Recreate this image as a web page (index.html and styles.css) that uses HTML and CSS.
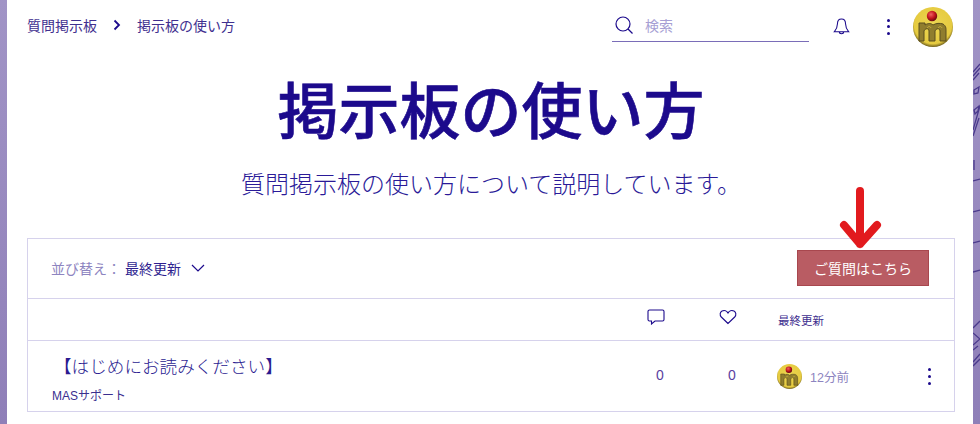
FILE: index.html
```html
<!DOCTYPE html>
<html lang="ja">
<head>
    <meta charset="UTF-8">
    <meta name="viewport" content="width=device-width, initial-scale=1.0">
    <title>掲示板の使い方</title>
    <link rel="stylesheet" href="styles.css">
</head>
<body>
    <svg class="defs" width="0" height="0" aria-hidden="true">
        <defs>
            <radialGradient id="coin" cx="50%" cy="45%" r="55%">
                <stop offset="0" stop-color="#ecd652"/>
                <stop offset="0.85" stop-color="#e6cb40"/>
                <stop offset="1" stop-color="#6e5e1c"/>
            </radialGradient>
            <radialGradient id="ball" cx="40%" cy="35%" r="65%">
                <stop offset="0" stop-color="#f06060"/>
                <stop offset="0.6" stop-color="#c0141c"/>
                <stop offset="1" stop-color="#6a0a10"/>
            </radialGradient>
            <symbol id="logo" viewBox="0 0 40 40">
                <circle cx="20" cy="20" r="20" fill="url(#coin)"/>
                <path d="M6 16h6v2c3-2 6-2 8 0 3-2 7-2 10-1 3 2 3 4 3 7v10h-6V24c0-3-4-3-5 0v10h-6V24c0-3-4-3-5 0v10H6z" fill="#8f7d2e" stroke="#5a4e1e" stroke-width="1"/>
                <path d="M14 21c2-2 3-2 4 0M25 21c2-2 3-2 4 0" fill="none" stroke="#c9b23c" stroke-width="1"/>
                <circle cx="19" cy="9" r="5.200" fill="url(#ball)"/>
            </symbol>
        </defs>
    </svg>

    <!-- Bit of the site background that shows on the right -->
    <svg class="backdrop" viewBox="0 0 7 424" width="7" height="424" aria-hidden="true">
        <g fill="none" stroke="#4a3a8c" stroke-width="1.300">
            <path d="M0 72l7-8M0 76l7-8M0 80l6-7M1 90l5-3-1 6-4 1zM1 110l5-4-1 5-3 3zM0 130l7-24M0 136l6-18M1 160v10M0 181l7-2M0 212l7-2M0 243l7-2M0 272l7-2M0 328l7-7M0 333l7 6-7 6M0 350l5-4M0 362l7-8M0 366l7-7"/>
        </g>
    </svg>

    <div class="page">
        <!-- Top bar -->
        <header class="topbar">
            <nav class="crumbs">
                <span>質問掲示板</span>
                <svg class="crumb-arrow" viewBox="0 0 8 12" width="8" height="12"><path d="M1.500 1.500 6 6l-4.500 4.500" fill="none" stroke="#1c0a8c" stroke-width="1.800"/></svg>
                <span>掲示板の使い方</span>
            </nav>
            <div class="search">
                <svg viewBox="0 0 18 18" width="18" height="18"><circle cx="8" cy="8" r="7" fill="none" stroke="#1c0a8c" stroke-width="1.200"/><path d="M13 13l4.500 4.500" stroke="#1c0a8c" stroke-width="1.200"/></svg>
                <span class="search-text">検索</span>
            </div>
            <svg class="bell" viewBox="0 0 16 16" width="17" height="17"><path d="M8 1C5.500 1 4.200 3 4.200 5.500c0 3-.8 5-3 7.500h13.600c-2.200-2.500-3-4.500-3-7.500C11.800 3 10.500 1 8 1z M6 13.200c0 2.100 4 2.100 4 0" fill="none" stroke="#1c0a8c" stroke-width="1"/></svg>
            <div class="dots"><i></i><i></i><i></i></div>
            <svg class="avatar" width="40" height="40"><use href="#logo"/></svg>
        </header>

        <!-- Heading -->
        <h1>掲示板の使い方</h1>
        <p class="lead">質問掲示板の使い方について説明しています。</p>

        <!-- Post list -->
        <section class="board">
            <div class="board-head">
                <div class="sort">
                    <span class="sort-label">並び替え：</span>
                    <span class="sort-value">最終更新</span>
                    <svg viewBox="0 0 14 8" width="14" height="8"><path d="M1 1l6 6 6-6" fill="none" stroke="#1c0a8c" stroke-width="1.200"/></svg>
                </div>
                <div class="ask-wrap">
                    <svg class="red-arrow" viewBox="0 0 44 66" width="44" height="66"><path d="M22 4v53M6 38l16 19 17-19" fill="none" stroke="#e21a1e" stroke-width="8" stroke-linecap="round" stroke-linejoin="round"/></svg>
                    <button class="ask">ご質問はこちら</button>
                </div>
            </div>
            <div class="row cols">
                <div class="col-c"><svg viewBox="0 0 18 16" width="18" height="16"><path d="M2.500 1h13A1.500 1.500 0 0 1 17 2.500v8a1.500 1.500 0 0 1-1.500 1.500H8l-3.500 3v-3h-2A1.500 1.500 0 0 1 1 10.500v-8A1.500 1.500 0 0 1 2.500 1z" fill="none" stroke="#1c0a8c" stroke-width="1.100"/></svg></div>
                <div class="col-c"><svg viewBox="0 0 18 16" width="18" height="16"><path d="M9 14.500 2.300 8C.4 6 1 3 3 2c2.200-1.100 4.800-.3 6 2 1.200-2.300 3.800-3.100 6-2 2 1 2.600 4 .7 6z" fill="none" stroke="#1c0a8c" stroke-width="1.100"/></svg></div>
                <div class="col-d head-date">最終更新</div>
                <div class="col-m"></div>
            </div>
            <div class="row post">
                <div class="post-main">
                    <div class="post-title">【はじめにお読みください】</div>
                    <div class="post-cat">MASサポート</div>
                </div>
                <div class="col-c num">0</div>
                <div class="col-c num">0</div>
                <div class="col-d meta">
                    <svg width="25" height="25"><use href="#logo"/></svg>
                    <span>12分前</span>
                </div>
                <div class="col-m"><div class="dots"><i></i><i></i><i></i></div></div>
            </div>
        </section>
    </div>
</body>
</html>
```

FILE: styles.css
```css
* {
    margin: 0;
    padding: 0;
    box-sizing: border-box;
}

html, body {
    height: 100%;
    overflow: hidden;
}

body {
    font-family: "Liberation Sans", "Noto Sans CJK JP", sans-serif;
    background: linear-gradient(#a194c6, #8f7fb8);
    color: #1c0a8c;
}

.defs {
    position: absolute;
}

.backdrop {
    position: absolute;
    top: 0;
    right: 0;
}

.page {
    width: 966px;
    height: 424px;
    margin-left: 7px;
    background: #fff;
    padding: 0 18px 0 20px;
}

/* Top bar */
.topbar {
    display: flex;
    align-items: center;
    height: 53px;
    padding-right: 1px;
}

.crumbs {
    display: flex;
    align-items: center;
    gap: 16px;
    padding-bottom: 3px;
    font-size: 14px;
    color: #3f2f8f;
    flex: 1;
}

.search {
    display: flex;
    align-items: center;
    gap: 12px;
    width: 197px;
    height: 29px;
    margin-top: 2px;
    padding: 0 0 5px 3px;
    border-bottom: 1px solid #7a6db8;
}

.search-text {
    font-size: 14px;
    color: #a79fd4;
}

.bell {
    margin-left: 24px;
}

.dots {
    display: flex;
    flex-direction: column;
    gap: 4px;
    align-items: center;
    width: 4px;
}

.dots i {
    width: 3px;
    height: 3px;
    border-radius: 50%;
    background: #1c0a8c;
}

.topbar .dots {
    gap: 3.500px;
    margin-left: 36px;
}

.avatar {
    margin-left: 23px;
    margin-right: 1px;
}

/* Heading */
h1 {
    font-size: 61px;
    font-weight: 500;
    -webkit-text-stroke: 0.600px #1c0a8c;
    line-height: 70px;
    text-align: center;
    margin-top: 25px;
    color: #1c0a8c;
}

.lead {
    font-size: 24px;
    font-weight: 300;
    line-height: 32px;
    text-align: center;
    margin-top: 21px;
    color: #2a1a98;
}

/* Board */
.board {
    margin-top: 37px;
    border: 1px solid #d6d2ec;
    height: 174px;
}

.board-head {
    display: flex;
    align-items: center;
    justify-content: space-between;
    height: 59px;
    padding: 0 25px 2px 23px;
}

.sort {
    display: flex;
    align-items: center;
    gap: 4px;
    font-size: 14px;
}

.sort-label {
    color: #8d84c0;
}

.sort-value {
    color: #2f1f90;
    margin-right: 6px;
}

.ask-wrap {
    position: relative;
}

.red-arrow {
    position: absolute;
    left: 41px;
    top: -63px;
    z-index: 2;
}

.ask {
    display: block;
    width: 132px;
    height: 36px;
    border: 1px solid #a8474e;
    background: #b95c63;
    color: #fff;
    font-family: inherit;
    font-size: 14px;
}

.row {
    display: flex;
    align-items: center;
    border-top: 1px solid #d6d2ec;
}

.cols {
    height: 42px;
    justify-content: flex-end;
}

.post {
    height: 71px;
}

.post-main {
    flex: 1;
    padding: 8px 0 0 24px;
}

.post-title {
    font-size: 17.600px;
    font-weight: 300;
    line-height: 22px;
    margin-left: 2px;
    color: #2a1a90;
}

.post-cat {
    font-size: 12px;
    line-height: 16px;
    margin-top: 10px;
    color: #3a2f8f;
}

.col-c {
    width: 72px;
    text-align: center;
}

.col-c svg {
    display: block;
    margin: 0 auto 6px;
}

.col-d {
    width: 140px;
    padding-left: 14px;
}

.col-m {
    width: 50px;
    display: flex;
    justify-content: center;
}

.head-date {
    font-size: 11.500px;
    color: #3f2f8f;
}

.num {
    padding: 0 0 2px 8px;
    font-size: 14px;
    font-weight: 300;
    color: #5a3f9f;
}

.meta {
    display: flex;
    align-items: center;
    gap: 8px;
    padding-left: 13px;
    font-size: 12.500px;
    color: #8d84c0;
}
```
